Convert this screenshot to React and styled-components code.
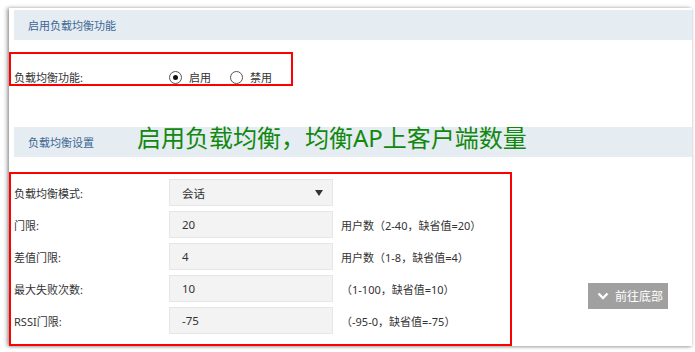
import styled, { createGlobalStyle } from "styled-components";

const GlobalStyle = createGlobalStyle`
  body {
    margin: 0;
    background: #fff;
    font-family: "Noto Sans", "Noto Sans CJK SC", sans-serif;
  }
`;

const Page = styled.div`
  position: relative;
  width: 695px;
  height: 352px;
  overflow: hidden;
  padding: 8px 0 0 9px;
  box-sizing: border-box;
`;

const Card = styled.div`
  width: 683px;
  height: 338px;
  background: #fff;
  box-shadow: -2px 0 4px rgba(0, 0, 0, 0.35), 0 1px 3px rgba(0, 0, 0, 0.2);
  padding-top: 2px;
  box-sizing: border-box;
`;

const SectionBar = styled.div`
  margin-left: 5px;
  margin-top: ${(p) => p.$top || 0}px;
  height: 30px;
  background: #e5ecf2;
  display: flex;
  align-items: center;
  padding-left: 14px;
  font-size: 11px;
  color: #3d6794;
`;

const Highlight = styled.div`
  margin-top: ${(p) => p.$top}px;
  width: ${(p) => p.$width}px;
  height: ${(p) => p.$height}px;
  border: 2px solid #f00;
  box-sizing: border-box;
  padding: ${(p) => p.$pad};
`;

const SwitchRow = styled.div`
  display: flex;
  align-items: center;
  height: 18px;
`;

const Label = styled.span`
  width: 155px;
  flex-shrink: 0;
  font-size: 11px;
  color: #333;
`;

const RadioItem = styled.label`
  display: flex;
  align-items: center;
  gap: 7px;
  margin-right: 19px;
  font-size: 11px;
  color: #333;
`;

const RadioDot = styled.span`
  width: 11px;
  height: 11px;
  border: 1px solid #555;
  border-radius: 50%;
  display: flex;
  align-items: center;
  justify-content: center;
  background: #fff;

  &::after {
    content: "";
    width: 5px;
    height: 5px;
    border-radius: 50%;
    background: ${(p) => (p.$on ? "#111" : "transparent")};
  }
`;

const Form = styled.div`
  display: flex;
  flex-direction: column;
  gap: 5px;
`;

const FieldRow = styled.div`
  display: flex;
  align-items: center;
  height: 27px;
`;

const Field = styled.div`
  width: 164px;
  height: 27px;
  box-sizing: border-box;
  background: #f3f3f3;
  border: 1px solid #e6e6e6;
  display: flex;
  align-items: center;
  justify-content: space-between;
  padding: 0 9px 0 12px;
  font-size: 11.5px;
  color: #333;
`;

const Caret = styled.span`
  width: 0;
  height: 0;
  border-left: 4.5px solid transparent;
  border-right: 4.5px solid transparent;
  border-top: 6px solid #333;
`;

const Hint = styled.span`
  margin-left: 8px;
  font-size: 11px;
  color: #333;
`;

const Note = styled.div`
  position: absolute;
  left: 137px;
  top: 125px;
  font-size: 24px;
  line-height: 26px;
  color: #12880f;
  white-space: nowrap;
`;

const JumpButton = styled.div`
  position: absolute;
  left: 588px;
  top: 283px;
  width: 80px;
  height: 26px;
  background: #a0a0a0;
  color: #fff;
  display: flex;
  align-items: center;
  gap: 6px;
  padding-left: 9px;
  box-sizing: border-box;
  font-size: 12px;
`;

const fields = [
  { label: "门限:", value: "20", hint: "用户数（2-40，缺省值=20）" },
  { label: "差值门限:", value: "4", hint: "用户数（1-8，缺省值=4）" },
  { label: "最大失败次数:", value: "10", hint: "（1-100，缺省值=10）" },
  { label: "RSSI门限:", value: "-75", hint: "（-95-0，缺省值=-75）" },
];

export default function App() {
  return (
    <Page>
      <GlobalStyle />
      <Card>
        <SectionBar>启用负载均衡功能</SectionBar>
        <Highlight $top={12} $width={284} $height={34} $pad="14px 0 0 3px">
          <SwitchRow>
            <Label>负载均衡功能:</Label>
            <RadioItem>
              <RadioDot $on />
              启用
            </RadioItem>
            <RadioItem>
              <RadioDot />
              禁用
            </RadioItem>
          </SwitchRow>
        </Highlight>
        <SectionBar $top={41}>负载均衡设置</SectionBar>
        <Highlight $top={15} $width={503} $height={174} $pad="5px 0 0 3px">
          <Form>
            <FieldRow>
              <Label>负载均衡模式:</Label>
              <Field>
                会话
                <Caret />
              </Field>
            </FieldRow>
            {fields.map((f) => (
              <FieldRow key={f.label}>
                <Label>{f.label}</Label>
                <Field>{f.value}</Field>
                <Hint>{f.hint}</Hint>
              </FieldRow>
            ))}
          </Form>
        </Highlight>
      </Card>
      <Note>启用负载均衡，均衡AP上客户端数量</Note>
      <JumpButton>
        <svg width="12" height="10" viewBox="0 0 12 10">
          <path d="M1.5 2.5 L6 7 L10.5 2.5" fill="none" stroke="#fff" strokeWidth="2.4" />
        </svg>
        前往底部
      </JumpButton>
    </Page>
  );
}
